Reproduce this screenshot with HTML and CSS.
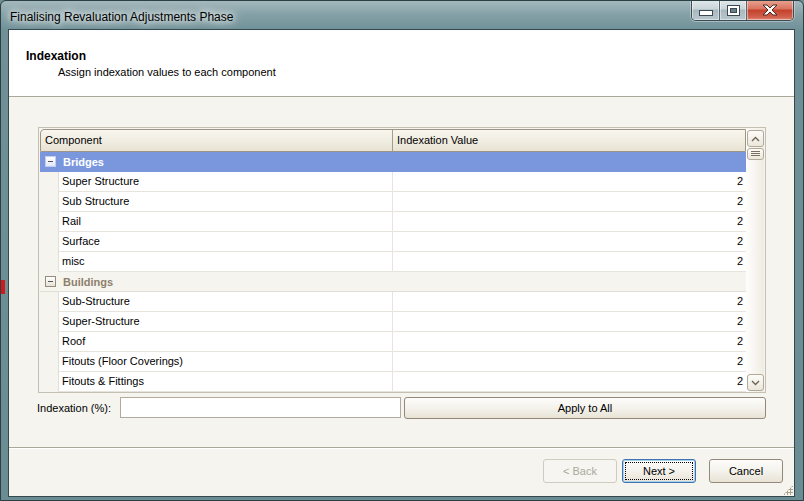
FILE: index.html
```html
<!DOCTYPE html>
<html lang="en">
<head>
    <meta charset="UTF-8">
    <meta name="viewport" content="width=device-width, initial-scale=1.0">
    <title>Finalising Revaluation Adjustments Phase</title>
    <link rel="stylesheet" href="styles.css">
</head>
<body>
    <div class="window">
        <span class="smudge"></span>
        <div class="titlebar">
            <div class="caption">Finalising Revaluation Adjustments Phase</div>
            <div class="controls">
                <span class="ctl min">
                    <svg width="14" height="6" viewBox="0 0 14 6"><rect x="0.5" y="0.5" width="13" height="5" fill="#fff" stroke="#3a4a52"/></svg>
                </span>
                <span class="ctl max">
                    <svg width="13" height="11" viewBox="0 0 13 11"><rect x="0.5" y="0.5" width="12" height="10" fill="#fff" stroke="#3a4a52"/><rect x="3.5" y="3.5" width="6" height="4" fill="#6b7d86" stroke="#3a4a52"/></svg>
                </span>
                <span class="ctl close">
                    <svg width="16" height="12" viewBox="0 0 16 12"><path d="M1 1 H5 L8 4 L11 1 H15 L10 6 L15 11 H11 L8 8 L5 11 H1 L6 6 Z" fill="#fff" stroke="#4a2a24" stroke-width="1" stroke-linejoin="round"/></svg>
                </span>
            </div>
        </div>
        <div class="client">
            <div class="page-head">
                <div class="page-title">Indexation</div>
                <div class="page-sub">Assign indexation values to each component</div>
            </div>
            <div class="page-body">
                <div class="grid">
                    <div class="grid-main">
                        <div class="grid-head">
                            <div class="hcell comp">Component</div>
                            <div class="hcell val">Indexation Value</div>
                        </div>
                        <div class="group selected"><span class="toggle"></span>Bridges</div>
                        <div class="row"><div class="indent"></div><div class="cell name">Super Structure</div><div class="cell val">2</div></div>
                        <div class="row"><div class="indent"></div><div class="cell name">Sub Structure</div><div class="cell val">2</div></div>
                        <div class="row"><div class="indent"></div><div class="cell name">Rail</div><div class="cell val">2</div></div>
                        <div class="row"><div class="indent"></div><div class="cell name">Surface</div><div class="cell val">2</div></div>
                        <div class="row"><div class="indent"></div><div class="cell name">misc</div><div class="cell val">2</div></div>
                        <div class="group"><span class="toggle"></span>Buildings</div>
                        <div class="row"><div class="indent"></div><div class="cell name">Sub-Structure</div><div class="cell val">2</div></div>
                        <div class="row"><div class="indent"></div><div class="cell name">Super-Structure</div><div class="cell val">2</div></div>
                        <div class="row"><div class="indent"></div><div class="cell name">Roof</div><div class="cell val">2</div></div>
                        <div class="row"><div class="indent"></div><div class="cell name">Fitouts (Floor Coverings)</div><div class="cell val">2</div></div>
                        <div class="row"><div class="indent"></div><div class="cell name">Fitouts &amp; Fittings</div><div class="cell val">2</div></div>
                    </div>
                    <div class="vscroll">
                        <span class="sbtn">
                            <svg width="9" height="6" viewBox="0 0 9 6"><path d="M1 5 L4.5 1.5 L8 5" fill="none" stroke="#6e6456" stroke-width="1.4"/></svg>
                        </span>
                        <span class="thumb">
                            <svg width="9" height="6" viewBox="0 0 9 6"><path d="M0 0.5 H9 M0 2.5 H9 M0 4.5 H9" stroke="#7a705f" stroke-width="1"/></svg>
                        </span>
                        <span class="track"></span>
                        <span class="sbtn">
                            <svg width="9" height="6" viewBox="0 0 9 6"><path d="M1 1 L4.5 4.5 L8 1" fill="none" stroke="#6e6456" stroke-width="1.4"/></svg>
                        </span>
                    </div>
                </div>
                <div class="apply-row">
                    <label class="apply-label" for="pct">Indexation (%):</label>
                    <input class="apply-input" id="pct" type="text">
                    <button class="btn apply-btn">Apply to All</button>
                </div>
            </div>
            <div class="wizard-foot">
                <button class="btn wiz" disabled>&lt; Back</button>
                <button class="btn wiz focus"><span>Next &gt;</span></button>
                <button class="btn wiz cancel">Cancel</button>
                <span class="grip"></span>
            </div>
        </div>
    </div>
</body>
</html>
```

FILE: styles.css
```css
body {
    margin: 0;
    background-color: #6d8e95;
    font-family: "Liberation Sans", Arial, sans-serif;
    font-size: 11px;
    color: #000;
}
.window {
    position: relative;
    width: 804px;
    height: 501px;
    box-sizing: border-box;
    border: 1px solid #2b3f44;
    border-radius: 6px 6px 0 0;
    background: linear-gradient(180deg, #a3b8bd 0, #83a0a6 14px, #6f9097 30px, #6a8c93 100%);
    display: flex;
    flex-direction: column;
    padding: 0 8px 3px 7px;
    overflow: hidden;
}
.smudge {
    position: absolute;
    left: -1px;
    top: 279px;
    width: 5px;
    height: 14px;
    background-color: #d0191b;
    filter: blur(0.5px);
}
.titlebar {
    height: 28px;
    display: flex;
    justify-content: space-between;
    align-items: flex-start;
}
.caption {
    padding: 8px 0 0 2px;
    line-height: 16px;
    font-family: "Liberation Sans", Arial, sans-serif;
    font-size: 12px;
    color: #000;
    text-shadow: 0 0 6px #fff, 0 0 10px #fff, 0 0 14px rgba(255, 255, 255, 0.8);
}
.controls {
    display: flex;
    margin-top: -1px;
    margin-right: 1px;
    border: 1px solid #3b4e55;
    border-top: none;
    border-radius: 0 0 5px 5px;
    overflow: hidden;
    box-shadow: 0 0 0 1px rgba(255, 255, 255, 0.35);
}
.ctl {
    height: 20px;
    display: flex;
    align-items: center;
    justify-content: center;
    box-sizing: border-box;
    box-shadow: inset 0 0 0 1px rgba(255, 255, 255, 0.45);
}
.ctl.min {
    width: 28px;
    padding-top: 5px;
    background: linear-gradient(180deg, #e2e9ec 0, #c9d4d9 45%, #a9b8bf 50%, #b9c7cd 100%);
    border-right: 1px solid #53666d;
}
.ctl.max {
    width: 27px;
    background: linear-gradient(180deg, #e2e9ec 0, #c9d4d9 45%, #a9b8bf 50%, #b9c7cd 100%);
    border-right: 1px solid #53666d;
}
.ctl.close {
    width: 46px;
    background: linear-gradient(180deg, #e8a593 0, #d8735f 45%, #c5412b 50%, #d0604c 85%, #e08a70 100%);
}
.client {
    flex: 1;
    display: flex;
    flex-direction: column;
    border: 1px solid #34494e;
    background-color: #f5f4ef;
}
.page-head {
    height: 67px;
    box-sizing: border-box;
    background-color: #fff;
    border-bottom: 1px solid #aca899;
    padding: 19px 0 0 17px;
}
.page-title {
    font-weight: bold;
    font-size: 12px;
    line-height: 14px;
}
.page-sub {
    margin-top: 2px;
    padding-left: 32px;
    line-height: 14px;
}
.page-body {
    flex: 1;
    padding: 30px 28px 0 29px;
}
.grid {
    display: flex;
    height: 266px;
    box-sizing: border-box;
    border: 1px solid #c4bfb2;
    padding: 1px 0 0 1px;
    background-color: #f5f4ef;
}
.grid-main {
    width: 706px;
    background-color: #fff;
}
.grid-head {
    display: flex;
    height: 23px;
    box-sizing: border-box;
    border: 1px solid #9f9584;
    border-radius: 4px 0 0 0;
    background: linear-gradient(180deg, #f8f6ef 0, #efebdf 60%, #e7e2d3 100%);
}
.hcell {
    line-height: 21px;
    padding-left: 4px;
}
.hcell.comp {
    width: 347px;
    border-right: 1px solid #a59c8b;
}
.hcell.val {
    flex: 1;
}
.group {
    display: flex;
    align-items: center;
    height: 20px;
    box-sizing: border-box;
    font-weight: bold;
    font-size: 11px;
    padding-left: 5px;
    color: #8e7f6a;
    background-color: #f5f4ef;
    border-bottom: 1px solid #e2dfd5;
}
.group.selected {
    background-color: #7a97de;
    color: #fff;
    border-bottom-color: #7a97de;
}
.toggle {
    position: relative;
    width: 9px;
    height: 9px;
    margin-right: 7px;
    border: 1px solid #978c7c;
    background: linear-gradient(180deg, #fff, #e6e2d8);
}
.group.selected .toggle {
    border-color: #c3cdf0;
    background: linear-gradient(180deg, #fff, #e3e8f6);
}
.toggle::after {
    content: "";
    position: absolute;
    left: 2px;
    top: 4px;
    width: 5px;
    height: 1px;
    background-color: #555;
}
.row {
    display: flex;
    height: 20px;
}
.indent {
    width: 18px;
    background-color: #f5f4ef;
    border-right: 1px solid #e2dfd5;
}
.cell {
    line-height: 19px;
    border-bottom: 1px solid #e6e4dc;
}
.cell.name {
    width: 330px;
    padding-left: 3px;
    border-right: 1px solid #e6e4dc;
}
.cell.val {
    flex: 1;
    text-align: right;
    padding-right: 3px;
}
.vscroll {
    width: 18px;
    display: flex;
    flex-direction: column;
    align-items: center;
    background: linear-gradient(90deg, #fefefd 0, #f5f3ec 60%, #efece2 100%);
    padding: 1px 0 1px 0;
    box-sizing: border-box;
}
.sbtn, .thumb {
    width: 17px;
    box-sizing: border-box;
    display: flex;
    align-items: center;
    justify-content: center;
    border: 1px solid #b3a999;
    border-radius: 3px;
    background: linear-gradient(180deg, #fdfcf9, #ebe7dc);
}
.sbtn {
    height: 17px;
}
.thumb {
    height: 12px;
    margin-top: 1px;
}
.track {
    flex: 1;
}
.apply-row {
    display: flex;
    align-items: center;
    margin-top: 4px;
    height: 22px;
}
.apply-label {
    margin-left: -1px;
    width: 83px;
}
.apply-input {
    width: 281px;
    height: 21px;
    box-sizing: border-box;
    border: 1px solid #b3aa9b;
    background-color: #fff;
    margin: 0 3px 0 0;
    padding: 0;
    align-self: flex-start;
}
.btn {
    font-family: "Liberation Sans", Arial, sans-serif;
    font-size: 11px;
    color: #000;
    border: 1px solid #93887a;
    border-radius: 3px;
    background: linear-gradient(180deg, #fdfcfa 0, #f4f2ec 50%, #e8e3d6 100%);
    padding: 0;
    box-sizing: border-box;
}
.apply-btn {
    width: 362px;
    height: 22px;
}
.wizard-foot {
    position: relative;
    height: 49px;
    box-sizing: border-box;
    border-top: 1px solid #aca899;
    box-shadow: inset 0 1px 0 #fff;
    display: flex;
    justify-content: flex-end;
    align-items: flex-start;
    padding: 11px 11px 0 0;
}
.wiz {
    width: 74px;
    height: 24px;
}
.wiz[disabled] {
    color: #aca899;
    border-color: #cfcbbe;
    background: #f6f5f1;
}
.wiz.focus {
    margin-left: 5px;
    border-color: #3e73ad;
    box-shadow: inset 0 0 0 1px #a8d2f0;
    padding: 2px;
}
.wiz.focus span {
    display: block;
    height: 100%;
    box-sizing: border-box;
    border: 1px dotted #000;
    line-height: 16px;
}
.wiz.cancel {
    margin-left: 13px;
}
.grip {
    position: absolute;
    right: 1px;
    bottom: 1px;
    width: 10px;
    height: 10px;
    background:
        radial-gradient(circle, #a8a291 1px, transparent 1.2px) 0 0 / 3px 3px;
    clip-path: polygon(100% 0, 100% 100%, 0 100%);
}
```
